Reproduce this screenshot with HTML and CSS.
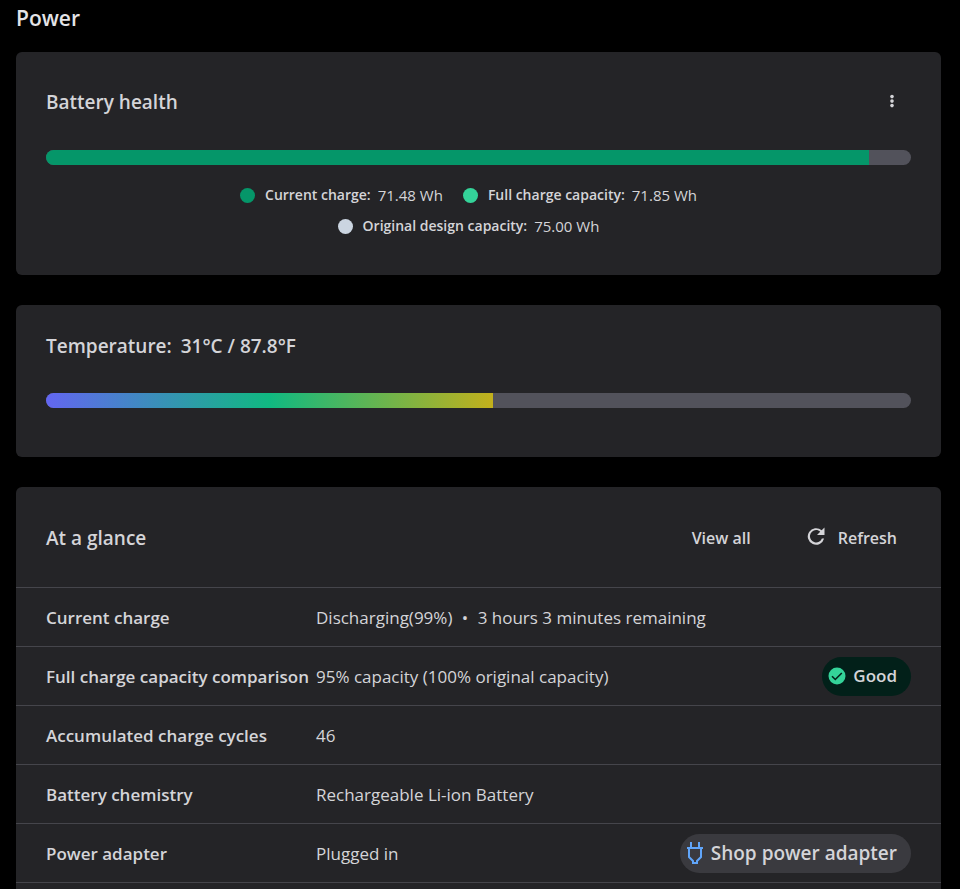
FILE: index.html
```html
<!DOCTYPE html>
<html lang="en">
<head>
  <meta charset="UTF-8" />
  <meta name="viewport" content="width=device-width, initial-scale=1.0"/>
  <title>Power</title>
  <link rel="stylesheet" href="styles.css">
</head>
<body>

  <main>
    <h1>Power</h1>

    <section class="card battery">
      <div class="card-header">
        <h2>Battery health</h2>
        <button class="menu-btn" type="button" aria-label="More options">
          <svg width="20" height="20" viewBox="0 0 20 20" fill="currentColor">
            <circle cx="10" cy="4" r="2"/>
            <circle cx="10" cy="9" r="2"/>
            <circle cx="10" cy="14" r="2"/>
          </svg>
        </button>
      </div>
      <div class="bar"><div class="bar-fill charge" style="width: 95.1%"></div></div>
      <ul class="legend">
        <li><span class="dot current"></span><b>Current charge:</b><span>71.48 Wh</span></li>
        <li><span class="dot full"></span><b>Full charge capacity:</b><span>71.85 Wh</span></li>
        <li><span class="dot design"></span><b>Original design capacity:</b><span>75.00 Wh</span></li>
      </ul>
    </section>

    <section class="card temperature">
      <h2>Temperature: <span>31°C / 87.8°F</span></h2>
      <div class="bar"><div class="bar-fill heat" style="width: 51.7%"></div></div>
    </section>

    <section class="card glance">
      <div class="card-header">
        <h2>At a glance</h2>
        <div class="actions">
          <button type="button">View all</button>
          <button type="button">
            <svg width="24" height="24" viewBox="0 0 24 24" fill="currentColor">
              <path d="M17.650 4.350A8.300 8.300 0 1 0 20.100 12.500h-2.200A6.200 6.200 0 1 1 12 4c1.660 0 3.140.69 4.220 1.780L13 9h7.500V1.500z"/>
            </svg>
            Refresh
          </button>
        </div>
      </div>

      <table>
        <tbody>
          <tr>
            <th scope="row">Current charge</th>
            <td colspan="2">Discharging(99%) <span class="sep">•</span> 3 hours 3 minutes remaining</td>
          </tr>
          <tr>
            <th scope="row">Full charge capacity comparison</th>
            <td>95% capacity (100% original capacity)</td>
            <td class="action">
              <span class="pill good">
                <svg width="18" height="18" viewBox="0 0 18 18" fill="none">
                  <circle cx="9" cy="9" r="8.500" fill="#34d399"/>
                  <path d="M4 9.300l3.300 3.200 6.500-6.500" stroke="#022019" stroke-width="1.600"/>
                </svg>
                Good
              </span>
            </td>
          </tr>
          <tr>
            <th scope="row">Accumulated charge cycles</th>
            <td colspan="2">46</td>
          </tr>
          <tr>
            <th scope="row">Battery chemistry</th>
            <td colspan="2">Rechargeable Li-ion Battery</td>
          </tr>
          <tr>
            <th scope="row">Power adapter</th>
            <td>Plugged in</td>
            <td class="action">
              <a class="pill shop" href="#">
                <svg width="18" height="24" viewBox="0 0 18 24" fill="none" stroke="#60a5fa" stroke-width="2">
                  <path d="M5 1v6M13 1v6M1 7h16M3 7v9l4 4v2h4v-2l4-4V7"/>
                </svg>
                Shop power adapter
              </a>
            </td>
          </tr>
        </tbody>
      </table>
    </section>
  </main>

</body>
</html>
```
FILE: styles.css
```css
* {
  margin: 0;
  padding: 0;
  box-sizing: border-box;
}

body {
  font-family: 'Segoe UI', 'Open Sans', 'Noto Sans', sans-serif;
  font-size: 17px;
  line-height: 24px;
  background-color: #000;
  color: #d4d4d8;
}

main {
  display: flex;
  flex-direction: column;
  min-height: 100vh;
  padding: 4px 19px 0 16px;
}

h1 {
  font-size: 21px;
  line-height: 28px;
  font-weight: 600;
  color: #e4e4e7;
  margin-bottom: 20px;
}

h2 {
  font-size: 19px;
  line-height: 28px;
  font-weight: 600;
}

button {
  font: inherit;
  color: inherit;
  background: none;
  border: none;
  cursor: pointer;
}

svg {
  display: block;
  flex: none;
}

.card {
  background-color: #242427;
  border-radius: 6px;
  padding: 27px 30px 49px;
  margin-bottom: 30px;
}

.card-header {
  display: flex;
  align-items: center;
  justify-content: space-between;
}

.battery {
  padding-top: 36px;
  padding-bottom: 37px;
}

.battery .card-header {
  margin-bottom: 34px;
}

.menu-btn {
  padding: 0 10px;
}

.menu-btn svg {
  width: 18px;
  height: 18px;
}

.bar {
  height: 15px;
  border-radius: 8px;
  background-color: #52525b;
  overflow: hidden;
}

.bar-fill {
  height: 100%;
}

.charge {
  background-color: #059669;
}

.heat {
  background: linear-gradient(to right, #6366f1, #10b981 50%, #c2b01c);
}

.legend {
  display: flex;
  flex-wrap: wrap;
  justify-content: center;
  row-gap: 7px;
  max-width: 540px;
  margin: 18px auto 0;
  list-style: none;
  font-size: 15px;
}

.legend li {
  display: flex;
  align-items: center;
  padding-right: 20px;
}

.legend b {
  font-size: 14px;
  font-weight: 600;
  margin: 0 7px 0 10px;
}

.dot {
  width: 15px;
  height: 15px;
  border-radius: 50%;
}

.current {
  background-color: #059669;
}

.full {
  background-color: #34d399;
}

.design {
  background-color: #cbd5e1;
}

.temperature h2 {
  margin-bottom: 33px;
}

.temperature h2 span {
  margin-left: 4px;
}

.glance {
  flex: 1;
  padding: 0;
  margin-bottom: 0;
  border-radius: 6px 6px 0 0;
}

.glance .card-header {
  padding: 37px 30px 35px;
}

.actions {
  display: flex;
  gap: 25px;
}

.actions button {
  display: flex;
  align-items: center;
  gap: 10px;
  padding: 0 14px;
  font-size: 16px;
  font-weight: 600;
}

table {
  width: 100%;
  border-collapse: collapse;
  border-bottom: 1px solid #45454b;
}

tr {
  border-top: 1px solid #45454b;
}

th,
td {
  height: 59px;
  padding-top: 2px;
  text-align: left;
  white-space: nowrap;
}

th {
  width: 300px;
  padding-left: 30px;
  font-weight: 600;
}

.sep {
  margin: 0 5px;
}

.action {
  padding-top: 0;
  padding-right: 30px;
}

.pill {
  display: flex;
  align-items: center;
  gap: 7px;
  width: fit-content;
  height: 39px;
  margin-left: auto;
  padding: 0 14px 0 6px;
  border-radius: 20px;
  font-weight: 600;
}

.good {
  background-color: #022019;
}

.shop {
  background-color: #3a3a3f;
  color: inherit;
  font-size: 19px;
  text-decoration: none;
}
```
